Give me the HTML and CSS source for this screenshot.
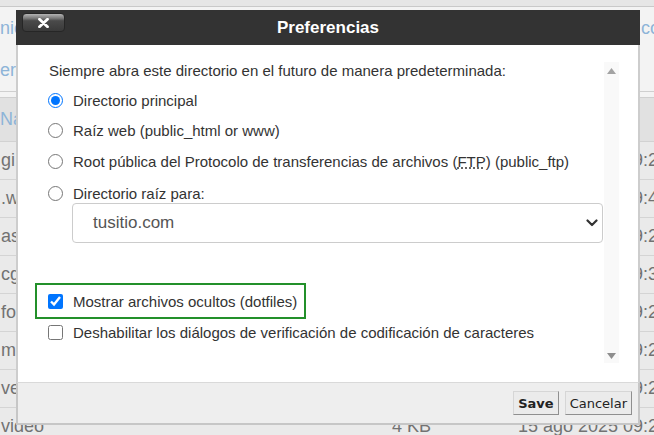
FILE: index.html
```html
<!DOCTYPE html>
<html lang="es">
<head>
    <meta charset="UTF-8">
    <meta name="viewport" content="width=device-width, initial-scale=1.0">
    <title>Preferencias</title>
    <link rel="stylesheet" href="styles.css">
</head>
<body>
    <!-- file manager behind the modal -->
    <div class="fm">
        <div class="fm-top"></div>
        <div class="fm-toolbar">
            <div class="fm-links"><span class="fm-link">nicio</span><span class="fm-link">cci</span></div>
            <div class="fm-links fm-links-low"><span class="fm-link">er</span></div>
        </div>
        <div class="fm-gap"></div>
        <div class="fm-head"><span class="fm-link">Name</span></div>
        <div class="fm-row"><span>gi</span><span>4 KB</span><span>15 ago 2025 09:25</span></div>
        <div class="fm-row"><span>.w</span><span>4 KB</span><span>15 ago 2025 09:41</span></div>
        <div class="fm-row"><span>as</span><span>4 KB</span><span>15 ago 2025 09:24</span></div>
        <div class="fm-row"><span>cg</span><span>4 KB</span><span>15 ago 2025 09:33</span></div>
        <div class="fm-row"><span>for</span><span>4 KB</span><span>15 ago 2025 09:24</span></div>
        <div class="fm-row"><span>m</span><span>4 KB</span><span>15 ago 2025 09:24</span></div>
        <div class="fm-row"><span>ve</span><span>4 KB</span><span>15 ago 2025 09:24</span></div>
        <div class="fm-row"><span>video</span><span>4 KB</span><span>15 ago 2025 09:24</span></div>
    </div>

    <div class="dialog">
        <div class="dialog-head">
            <button class="dialog-close" title="Cerrar">
                <svg width="11" height="10" viewBox="0 0 11 10">
                    <path d="M1.5 1.2L9.5 8.8M9.5 1.2L1.5 8.8" stroke="#fff" stroke-width="2.8" stroke-linecap="round"/>
                </svg>
            </button>
            <div class="dialog-title">Preferencias</div>
        </div>

        <div class="dialog-body">
            <div class="pane">
                <div class="pane-content">
                    <div class="intro">Siempre abra este directorio en el futuro de manera predeterminada:</div>

                    <label class="opt opt-1"><input type="radio" name="dir" checked><span>Directorio principal</span></label>
                    <label class="opt opt-2"><input type="radio" name="dir"><span>Raíz web (public_html or www)</span></label>
                    <label class="opt opt-3"><input type="radio" name="dir"><span>Root pública del Protocolo de transferencias de archivos (<abbr title="File Transfer Protocol">FTP</abbr>) (public_ftp)</span></label>
                    <label class="opt opt-4"><input type="radio" name="dir"><span>Directorio raíz para:</span></label>

                    <div class="picker">
                        <span>tusitio.com</span>
                        <svg width="12" height="8" viewBox="0 0 12 8">
                            <path d="M1.5 1.5L6 6L10.5 1.5" stroke="#333" stroke-width="2.2" fill="none" stroke-linecap="round" stroke-linejoin="round"/>
                        </svg>
                    </div>

                    <label class="opt-check opt-highlight"><input type="checkbox" checked><span>Mostrar archivos ocultos (dotfiles)</span></label>
                    <label class="opt-check"><input type="checkbox"><span>Deshabilitar los diálogos de verificación de codificación de caracteres</span></label>
                </div>
                <div class="pane-scroll">
                    <svg width="9" height="6" viewBox="0 0 9 6"><polygon points="4.5,0 9,6 0,6" fill="#a3a3a3"/></svg>
                    <svg width="9" height="6" viewBox="0 0 9 6"><polygon points="0,0 9,0 4.5,6" fill="#8e8e8e"/></svg>
                </div>
            </div>
        </div>

        <div class="dialog-foot">
            <button class="btn btn-save">Save</button>
            <button class="btn">Cancelar</button>
        </div>
    </div>
</body>
</html>
```

FILE: styles.css
```css
body {
    margin: 0;
    width: 654px;
    height: 435px;
    position: relative;
    overflow: hidden;
    font-family: 'Liberation Sans', Arial, sans-serif;
    background-color: #ebebeb;
}

/* ---------- background file manager ---------- */

.fm {
    font-size: 18px;
    color: #727272;
    white-space: nowrap;
    overflow: hidden;
}

.fm-top {
    height: 6px;
    background-color: #e6e6e6;
    border-bottom: 1px solid #c9c9c9;
}

.fm-toolbar {
    height: 85px;
    background-color: #f3f3f3;
    border-bottom: 1px solid #cfcfcf;
    box-sizing: border-box;
    padding-top: 11px;
}

.fm-links {
    display: grid;
    grid-template-columns: 641px 13px;
    line-height: 20px;
    overflow: hidden;
}

.fm-links-low {
    margin-top: 22px;
}

.fm-link {
    color: #8db4d8;
}

.fm-gap {
    height: 5px;
    background-color: #f3f3f3;
    border-bottom: 1px solid #cfcfcf;
}

.fm-head {
    height: 43px;
    line-height: 43px;
    background-color: #e1e1e1;
    border-bottom: 1px solid #d2d2d2;
}

.fm-row {
    display: grid;
    grid-template-columns: 392px 126px 136px;
    height: 37px;
    line-height: 37px;
    background-color: #eaeaea;
    border-bottom: 1px solid #d4d4d4;
    overflow: hidden;
}

.fm-row span {
    overflow: hidden;
}

.fm-row span:first-child {
    padding-left: 1px;
}

/* ---------- dialog ---------- */

.dialog {
    position: absolute;
    left: 16px;
    top: 10px;
    width: 624px;
}

.dialog-head {
    height: 35px;
    background-color: #333;
    display: flex;
    align-items: center;
    justify-content: center;
    position: relative;
}

.dialog-title {
    color: #fff;
    font-size: 17px;
    font-weight: bold;
}

.dialog-close {
    position: absolute;
    left: 6px;
    top: 3px;
    width: 43px;
    height: 19px;
    padding: 0;
    border: 1px solid #262626;
    border-radius: 4px;
    background: linear-gradient(#b4b4b4 0%, #7a7a7a 25%, #4a4a4a 40%, #3a3a3a 100%);
    display: flex;
    align-items: center;
    justify-content: center;
    cursor: pointer;
}

.dialog-body {
    background-color: #fff;
    border-left: 2px solid #cdcdcd;
    border-right: 2px solid #cdcdcd;
    padding: 17px 19px 19px 18px;
}

.pane {
    display: flex;
    height: 301px;
}

.pane-content {
    flex: 1;
    padding-left: 12px;
    font-size: 15px;
    color: #333;
}

.pane-scroll {
    width: 15px;
    background-color: #f9f9f9;
    display: flex;
    flex-direction: column;
    justify-content: space-between;
    align-items: center;
    padding: 6px 0 4px 0;
    box-sizing: border-box;
}

.pane-scroll svg {
    display: block;
}

.intro {
    line-height: 18px;
    padding-left: 1px;
}

.opt,
.opt-check {
    display: flex;
    align-items: center;
    gap: 10px;
    height: 20px;
}

.opt input,
.opt-check input {
    width: 15px;
    height: 15px;
    margin: 0;
    flex-shrink: 0;
}

.opt-1 { margin-top: 10px; }
.opt-2 { margin-top: 10px; }
.opt-3 { margin-top: 11px; }
.opt-4 { margin-top: 12px; }

abbr {
    text-decoration: underline dotted;
}

.picker {
    margin: 0 1px 0 24px;
    height: 40px;
    box-sizing: border-box;
    border: 1px solid #ccc;
    border-radius: 4px;
    display: flex;
    align-items: center;
    justify-content: space-between;
    padding: 0 4px 0 20px;
    font-size: 17px;
    color: #555;
}

.opt-highlight {
    margin: 40px 0 0 -13px;
    width: 271px;
    height: 36px;
    box-sizing: border-box;
    border: 2px solid #23902a;
    padding-left: 11px;
}

.opt-highlight + .opt-check {
    margin-top: 3px;
}

.dialog-foot {
    height: 43px;
    box-sizing: border-box;
    background-color: #eee;
    border: 2px solid #c6c6c6;
    border-top: 1px solid #d9d9d9;
    display: flex;
    justify-content: flex-end;
    align-items: flex-start;
    gap: 6px;
    padding: 8px 6px 0 0;
}

.btn {
    font-family: 'DejaVu Sans', Verdana, sans-serif;
    font-size: 13px;
    height: 24px;
    padding: 0 4px;
    color: #222;
    background-color: #ebebeb;
    border: 1px solid;
    border-color: #d6d6d6 #8f8f8f #8f8f8f #d6d6d6;
    cursor: pointer;
}

.btn-save {
    font-weight: bold;
}
```
